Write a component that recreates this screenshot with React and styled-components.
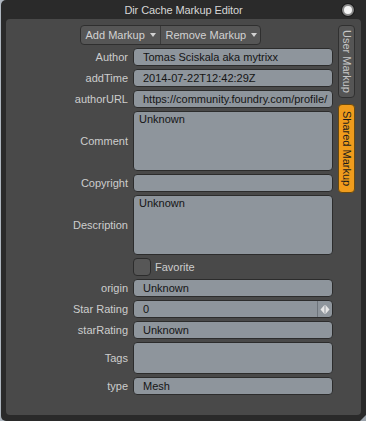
import React from 'react'
import styled, { createGlobalStyle } from 'styled-components'

const GlobalStyle = createGlobalStyle`
  html, body {
    margin: 0;
    padding: 0;
    background: #aeb6bf;
  }
  body {
    font-family: 'Liberation Sans', Arial, sans-serif;
    font-size: 11px;
  }
`

const Window = styled.div`
  margin-left: 1px;
  height: 421px;
  background: #2a2a2a;
  border-radius: 5px 0 0 5px;
  display: flex;
  flex-direction: column;
  position: relative;
  overflow: hidden;
`

const TitleBar = styled.div`
  height: 19px;
  display: grid;
  grid-template-columns: 1fr auto 1fr;
  align-items: center;
  color: #d6d6d6;
  font-size: 11px;
`

const Title = styled.div`
  grid-column: 2;
  letter-spacing: -0.1px;
`

const Dot = styled.div`
  grid-column: 3;
  justify-self: end;
  margin-right: 12px;
  width: 8px;
  height: 8px;
  border-radius: 50%;
  background: #f4f4f4;
  border: 2px solid #8a8a8a;
  box-shadow: 0 0 0 1px #1a1a1a;
`

const Panel = styled.div`
  flex: 1;
  margin: 0 5px 6px 5px;
  background: #494949;
  border-radius: 4px;
  padding: 6px 6px 0 0;
  display: flex;
  gap: 5px;
`

const FormColumn = styled.div`
  flex: 1;
  display: flex;
  flex-direction: column;
  gap: 3px;
`

const Toolbar = styled.div`
  display: flex;
  justify-content: center;
  padding-left: 1px;
`

const ButtonGroup = styled.div`
  display: flex;
  height: 18px;
  border: 1px solid #2f2f2f;
  border-radius: 4px;
  background: #565656;
  overflow: hidden;
`

const MenuButton = styled.div`
  display: flex;
  align-items: center;
  gap: 5px;
  width: ${p => p.$w}px;
  padding-left: 5px;
  box-sizing: border-box;
  color: #d2d2d2;
  font-size: 11px;
  & + & {
    border-left: 1px solid #3a3a3a;
  }
`

const Caret = styled.span`
  width: 0;
  height: 0;
  border-left: 3.5px solid transparent;
  border-right: 3.5px solid transparent;
  border-top: 4px solid #d2d2d2;
`

const Form = styled.div`
  display: grid;
  grid-template-columns: 122px 200px;
  column-gap: 5px;
  row-gap: 3px;
`

const Label = styled.div`
  text-align: right;
  align-self: center;
  color: #cdcdcd;
  font-size: 11px;
  white-space: nowrap;
`

const Field = styled.div`
  height: ${p => p.$h || 18}px;
  box-sizing: border-box;
  border: 1px solid #2c2c2c;
  border-radius: 4px;
  background: #8e959c;
  color: #141414;
  font-size: 11px;
  display: flex;
  align-items: ${p => (p.$multi ? 'flex-start' : 'center')};
  padding: ${p => (p.$multi ? '1px 5px' : '0 0 0 9px')};
  overflow: hidden;
  white-space: nowrap;
`

const FieldText = styled.span`
  flex: 1;
  overflow: hidden;
`

const Spinner = styled.div`
  width: 14px;
  align-self: stretch;
  border-left: 1px solid #6d747b;
  display: flex;
  align-items: center;
  justify-content: center;
`

const CheckRow = styled.div`
  grid-column: 2;
  display: flex;
  align-items: center;
  gap: 4px;
  color: #cdcdcd;
  font-size: 11px;
`

const CheckBox = styled.div`
  width: 18px;
  height: 18px;
  box-sizing: border-box;
  border: 1px solid #2c2c2c;
  border-radius: 4px;
  background: #575757;
`

const Tabs = styled.div`
  width: 17px;
  display: flex;
  flex-direction: column;
  gap: 6px;
`

const Tab = styled.div`
  height: ${p => p.$h}px;
  box-sizing: border-box;
  writing-mode: vertical-rl;
  display: flex;
  align-items: center;
  justify-content: center;
  border: 1px solid ${p => (p.$active ? '#6a4a10' : '#303030')};
  border-radius: 4px;
  background: ${p => (p.$active ? '#f09c1c' : '#555555')};
  color: ${p => (p.$active ? '#1b1b1b' : '#c6c6c6')};
  font-size: 11px;
  white-space: nowrap;
`

const Grip = styled.svg`
  position: absolute;
  right: 0;
  bottom: 0;
`

const rows = [
  { label: 'Author', value: 'Tomas Sciskala aka mytrixx' },
  { label: 'addTime', value: '2014-07-22T12:42:29Z' },
  { label: 'authorURL', value: 'https://community.foundry.com/profile/' },
  { label: 'Comment', value: 'Unknown', h: 60 },
  { label: 'Copyright', value: '' },
  { label: 'Description', value: 'Unknown', h: 60 },
  { check: 'Favorite' },
  { label: 'origin', value: 'Unknown' },
  { label: 'Star Rating', value: '0', spin: true },
  { label: 'starRating', value: 'Unknown' },
  { label: 'Tags', value: '', h: 32 },
  { label: 'type', value: 'Mesh' },
]

const SpinIcon = () => (
  <svg width="10" height="9" viewBox="0 0 10 9">
    <path d="M4 0.5 L0.5 4.5 L4 8.5 Z" fill="#e6e6e6" />
    <rect x="4.5" y="0" width="1" height="9" fill="#e6e6e6" />
    <path d="M6 0.5 L9.5 4.5 L6 8.5 Z" fill="#e6e6e6" />
  </svg>
)

const App = () => {
  return (
    <Window>
      <GlobalStyle />
      <TitleBar>
        <Title>Dir Cache Markup Editor</Title>
        <Dot />
      </TitleBar>
      <Panel>
        <FormColumn>
          <Toolbar>
            <ButtonGroup>
              <MenuButton $w={79}>
                Add Markup <Caret />
              </MenuButton>
              <MenuButton $w={100}>
                Remove Markup <Caret />
              </MenuButton>
            </ButtonGroup>
          </Toolbar>
          <Form>
            {rows.map((r, i) =>
              r.check ? (
                <CheckRow key={i}>
                  <CheckBox />
                  {r.check}
                </CheckRow>
              ) : (
                <React.Fragment key={i}>
                  <Label>{r.label}</Label>
                  <Field $h={r.h} $multi={!!r.h}>
                    <FieldText>{r.value}</FieldText>
                    {r.spin && (
                      <Spinner>
                        <SpinIcon />
                      </Spinner>
                    )}
                  </Field>
                </React.Fragment>
              )
            )}
          </Form>
        </FormColumn>
        <Tabs>
          <Tab $h={73}>User Markup</Tab>
          <Tab $h={89} $active>
            Shared Markup
          </Tab>
        </Tabs>
      </Panel>
      <Grip width="6" height="6" viewBox="0 0 6 6">
        <path d="M6 0 L6 6 L0 6 Z" fill="#9aa2aa" />
      </Grip>
    </Window>
  )
}

export default App
